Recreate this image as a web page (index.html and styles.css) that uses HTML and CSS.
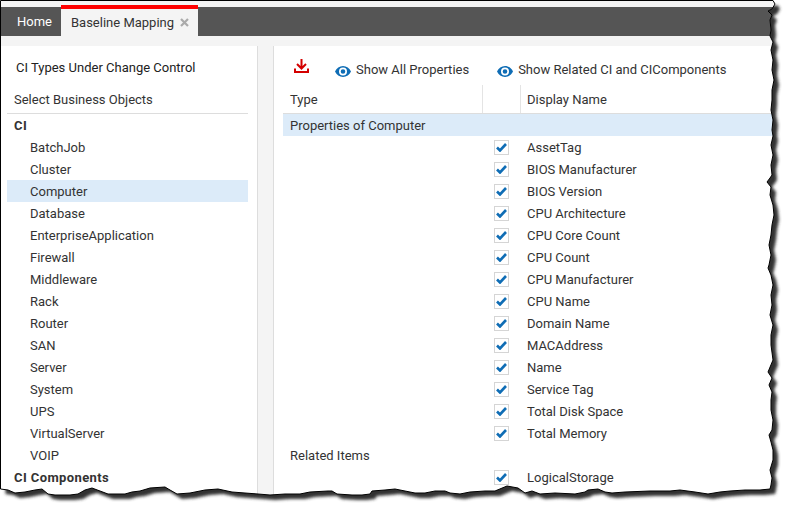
FILE: index.html
```html
<!DOCTYPE html>
<html lang="en">
<head>
    <meta charset="UTF-8">
    <title>Baseline Mapping</title>
    <link rel="stylesheet" href="styles.css">
</head>
<body>
    <header class="tabbar">
        <a class="tab" href="#">Home</a>
        <a class="tab active" href="#">Baseline Mapping
            <svg class="tab-close" width="9" height="9" viewBox="0 0 9 9"><path d="M1 1l7 7M8 1l-7 7"/></svg>
        </a>
    </header>

    <main class="content">
        <aside class="left-panel">
            <h2 class="panel-title">CI Types Under Change Control</h2>
            <div class="list-head">Select Business Objects</div>
            <div class="group">CI</div>
            <div class="item">BatchJob</div>
            <div class="item">Cluster</div>
            <div class="item selected">Computer</div>
            <div class="item">Database</div>
            <div class="item">EnterpriseApplication</div>
            <div class="item">Firewall</div>
            <div class="item">Middleware</div>
            <div class="item">Rack</div>
            <div class="item">Router</div>
            <div class="item">SAN</div>
            <div class="item">Server</div>
            <div class="item">System</div>
            <div class="item">UPS</div>
            <div class="item">VirtualServer</div>
            <div class="item">VOIP</div>
            <div class="group">CI Components</div>
        </aside>

        <section class="right-panel">
            <div class="toolbar">
                <svg class="download" width="15" height="15" viewBox="0 0 15 15"><path d="M7.500 0v9M3 5l4.500 4.500L12 5M1 9.500v3.500h13V9.500"/></svg>
                <a class="tool" href="#">
                    <svg class="eye" width="16" height="11" viewBox="0 0 16 11"><path fill-rule="evenodd" d="M8 0c3.500 0 6.500 2.200 8 5.500C14.500 8.800 11.500 11 8 11S1.500 8.800 0 5.500C1.500 2.200 4.500 0 8 0zm0 1.500a4 4 0 1 0 0 8 4 4 0 0 0 0-8zm0 1.700a2.300 2.300 0 1 1 0 4.600 2.300 2.300 0 0 1 0-4.600z"/></svg>
                    Show All Properties
                </a>
                <a class="tool" href="#">
                    <svg class="eye" width="16" height="11" viewBox="0 0 16 11"><path fill-rule="evenodd" d="M8 0c3.500 0 6.500 2.200 8 5.500C14.500 8.800 11.500 11 8 11S1.500 8.800 0 5.500C1.500 2.200 4.500 0 8 0zm0 1.500a4 4 0 1 0 0 8 4 4 0 0 0 0-8zm0 1.700a2.300 2.300 0 1 1 0 4.600 2.300 2.300 0 0 1 0-4.600z"/></svg>
                    Show Related CI and CIComponents
                </a>
            </div>

            <div class="grid-head">
                <div class="col-type">Type</div>
                <div class="col-check"></div>
                <div class="col-name">Display Name</div>
            </div>
            <div class="section-row">Properties of Computer</div>

            <div class="row"><span class="check"><svg width="11" height="9" viewBox="0 0 11 9"><path d="M1 4.500l3 3 6-6.500"/></svg></span><span class="name">AssetTag</span></div>
            <div class="row"><span class="check"><svg width="11" height="9" viewBox="0 0 11 9"><path d="M1 4.500l3 3 6-6.500"/></svg></span><span class="name">BIOS Manufacturer</span></div>
            <div class="row"><span class="check"><svg width="11" height="9" viewBox="0 0 11 9"><path d="M1 4.500l3 3 6-6.500"/></svg></span><span class="name">BIOS Version</span></div>
            <div class="row"><span class="check"><svg width="11" height="9" viewBox="0 0 11 9"><path d="M1 4.500l3 3 6-6.500"/></svg></span><span class="name">CPU Architecture</span></div>
            <div class="row"><span class="check"><svg width="11" height="9" viewBox="0 0 11 9"><path d="M1 4.500l3 3 6-6.500"/></svg></span><span class="name">CPU Core Count</span></div>
            <div class="row"><span class="check"><svg width="11" height="9" viewBox="0 0 11 9"><path d="M1 4.500l3 3 6-6.500"/></svg></span><span class="name">CPU Count</span></div>
            <div class="row"><span class="check"><svg width="11" height="9" viewBox="0 0 11 9"><path d="M1 4.500l3 3 6-6.500"/></svg></span><span class="name">CPU Manufacturer</span></div>
            <div class="row"><span class="check"><svg width="11" height="9" viewBox="0 0 11 9"><path d="M1 4.500l3 3 6-6.500"/></svg></span><span class="name">CPU Name</span></div>
            <div class="row"><span class="check"><svg width="11" height="9" viewBox="0 0 11 9"><path d="M1 4.500l3 3 6-6.500"/></svg></span><span class="name">Domain Name</span></div>
            <div class="row"><span class="check"><svg width="11" height="9" viewBox="0 0 11 9"><path d="M1 4.500l3 3 6-6.500"/></svg></span><span class="name">MACAddress</span></div>
            <div class="row"><span class="check"><svg width="11" height="9" viewBox="0 0 11 9"><path d="M1 4.500l3 3 6-6.500"/></svg></span><span class="name">Name</span></div>
            <div class="row"><span class="check"><svg width="11" height="9" viewBox="0 0 11 9"><path d="M1 4.500l3 3 6-6.500"/></svg></span><span class="name">Service Tag</span></div>
            <div class="row"><span class="check"><svg width="11" height="9" viewBox="0 0 11 9"><path d="M1 4.500l3 3 6-6.500"/></svg></span><span class="name">Total Disk Space</span></div>
            <div class="row"><span class="check"><svg width="11" height="9" viewBox="0 0 11 9"><path d="M1 4.500l3 3 6-6.500"/></svg></span><span class="name">Total Memory</span></div>
            <div class="plain-row">Related Items</div>
            <div class="row"><span class="check"><svg width="11" height="9" viewBox="0 0 11 9"><path d="M1 4.500l3 3 6-6.500"/></svg></span><span class="name">LogicalStorage</span></div>
        </section>
    </main>

    <!-- torn paper edge of the screenshot, lies over the page -->
    <svg class="torn" width="791" height="511" viewBox="0 0 791 511">
        <defs>
            <path id="sheet" d="M.5 .5H773L775 4 772 9 768 11 772 15 770 20 771 30 770 36 773 42 771 50 773 60 772 70 774 80 772 90 772 100 771 110 773 120 772 130 773 136 771 145 773 155 771 165 772 175 770 178 767 182 771 187 770 195 773 205 774 215 772 225 771 235 769 245 771 255 769 265 768 268 771 275 773 285 771 295 772 305 770 315 773 325 771 335 771 345 773 360 768 372 772 378 769 385 772 392 771 400 771 410 773 420 772 430 769 435 771 442 773 450 773 460 770 470 772 478 771 485 770 489 760 490 745 490 730 491 720 492 708 494 695 492 680 490 670 491 650 491 625 492 612 493 605 492 598 489 588 490 585 492 575 494 555 493 540 494 532 491 525 493 518 488 507 486 495 491 485 491 470 492 460 494 450 493 445 491 435 491 425 493 415 493 405 491 395 489 385 490 372 491 370 494 362 495 352 495 337 494 332 491 328 491 310 492 300 494 285 494 270 495 258 494 245 493 232 492 218 489 205 490 190 493 177 494 170 490 165 487 150 488 140 491 132 492 125 494 108 494 100 491 92 488 85 490 78 494 70 495 55 495 48 494 42 489 35 490 25 492 15 493 8 490 .5 489Z"/>
            <filter id="soft" x="-5%" y="-5%" width="110%" height="110%"><feGaussianBlur stdDeviation="1.700"/></filter>
            <clipPath id="outside"><path clip-rule="evenodd" d="M0 0H791V511H0ZM.5 .5H773L775 4 772 9 768 11 772 15 770 20 771 30 770 36 773 42 771 50 773 60 772 70 774 80 772 90 772 100 771 110 773 120 772 130 773 136 771 145 773 155 771 165 772 175 770 178 767 182 771 187 770 195 773 205 774 215 772 225 771 235 769 245 771 255 769 265 768 268 771 275 773 285 771 295 772 305 770 315 773 325 771 335 771 345 773 360 768 372 772 378 769 385 772 392 771 400 771 410 773 420 772 430 769 435 771 442 773 450 773 460 770 470 772 478 771 485 770 489 760 490 745 490 730 491 720 492 708 494 695 492 680 490 670 491 650 491 625 492 612 493 605 492 598 489 588 490 585 492 575 494 555 493 540 494 532 491 525 493 518 488 507 486 495 491 485 491 470 492 460 494 450 493 445 491 435 491 425 493 415 493 405 491 395 489 385 490 372 491 370 494 362 495 352 495 337 494 332 491 328 491 310 492 300 494 285 494 270 495 258 494 245 493 232 492 218 489 205 490 190 493 177 494 170 490 165 487 150 488 140 491 132 492 125 494 108 494 100 491 92 488 85 490 78 494 70 495 55 495 48 494 42 489 35 490 25 492 15 493 8 490 .5 489Z"/></clipPath>
        </defs>
        <g clip-path="url(#outside)">
            <rect class="torn-paper" width="791" height="511"/>
            <use href="#sheet" class="torn-shadow" transform="translate(5 5)" filter="url(#soft)"/>
        </g>
        <use href="#sheet" class="torn-line"/>
    </svg>
</body>
</html>
```

FILE: styles.css
```css
body {
    font-family: Roboto, "Liberation Sans", Arial, sans-serif;
    font-size: 13px;
    color: #333;
    margin: 0;
    width: 791px;
    height: 511px;
    overflow: hidden;
    position: relative;
    background-color: #f4f4f4;
    display: flex;
    flex-direction: column;
    padding-top: 7px;
    box-sizing: border-box;
}
a {
    color: inherit;
    text-decoration: none;
}

/* tabs */
.tabbar {
    height: 29px;
    background-color: #555;
    display: flex;
    flex-shrink: 0;
}
.tab {
    padding: 0 9px 0 17px;
    color: white;
    line-height: 28px;
    display: flex;
    align-items: center;
    gap: 6px;
}
.tab.active {
    width: 137px;
    box-sizing: border-box;
    margin-top: -2px;
    height: 31px;
    padding: 0 0 0 10px;
    border-top: 4px solid #f00;
    background-color: #f4f4f4;
    color: #333;
}
.tab-close {
    fill: none;
    stroke: #aaa;
    stroke-width: 2.200;
}

/* panels */
.content {
    display: flex;
    flex: 1;
    padding-top: 10px;
    min-height: 0;
}
.left-panel {
    width: 258px;
    box-sizing: border-box;
    background-color: white;
    border-right: 1px solid #ddd;
    padding: 0 9px 0 7px;
    flex-shrink: 0;
}
.panel-title {
    font-size: 13px;
    font-weight: normal;
    margin: 0;
    padding: 14px 0 0 9px;
    line-height: 15px;
    height: 15px;
    color: #222;
}
.list-head {
    height: 39px;
    box-sizing: border-box;
    padding: 17px 0 0 7px;
    line-height: 15px;
    border-bottom: 1px solid #ddd;
}
.group {
    height: 22px;
    line-height: 24px;
    padding-left: 7px;
    font-weight: bold;
    letter-spacing: .4px;
}
.item {
    height: 22px;
    line-height: 24px;
    padding-left: 23px;
}
.selected {
    background-color: #dcebf9;
}
.right-panel {
    flex: 1;
    margin-left: 15px;
    background-color: white;
    border-left: 1px solid #ddd;
    padding-left: 9px;
}
.toolbar {
    height: 39px;
    display: flex;
    align-items: center;
    padding-left: 11px;
}
.download {
    fill: none;
    stroke: #d40000;
    stroke-width: 2;
    margin: 1px 26px 0 0;
}
.tool {
    display: flex;
    align-items: center;
    gap: 5px;
    margin-right: 28px;
    margin-top: 7px;
    color: #333;
}
.eye {
    fill: #0f6db5;
    margin-top: 4px;
}
.grid-head {
    display: flex;
    height: 28px;
    line-height: 30px;
    border-bottom: 1px solid #ddd;
}
.col-type {
    width: 192px;
    padding-left: 7px;
}
.col-check {
    width: 37px;
    border-left: 1px solid #e4e4e4;
}
.col-name {
    border-left: 1px solid #e4e4e4;
    padding-left: 6px;
}
.section-row {
    height: 22px;
    line-height: 24px;
    padding-left: 7px;
    background-color: #dcebf9;
}
.plain-row {
    height: 22px;
    line-height: 24px;
    padding-left: 7px;
}
.row {
    height: 21px;
    padding-top: 1px;
    display: flex;
    align-items: center;
    padding-left: 211px;
}
.check {
    width: 13px;
    height: 13px;
    border: 1px solid #d5d5d5;
    display: flex;
    align-items: center;
    justify-content: center;
    margin-right: 18px;
}
.check path {
    fill: none;
    stroke: #0f6db5;
    stroke-width: 2.600;
}

/* torn edge overlay */
.torn {
    position: absolute;
    left: 0;
    top: 0;
}
.torn-paper {
    fill: white;
}
.torn-shadow {
    fill: #333;
}
.torn-line {
    fill: none;
    stroke: black;
    stroke-width: 1;
}
```
